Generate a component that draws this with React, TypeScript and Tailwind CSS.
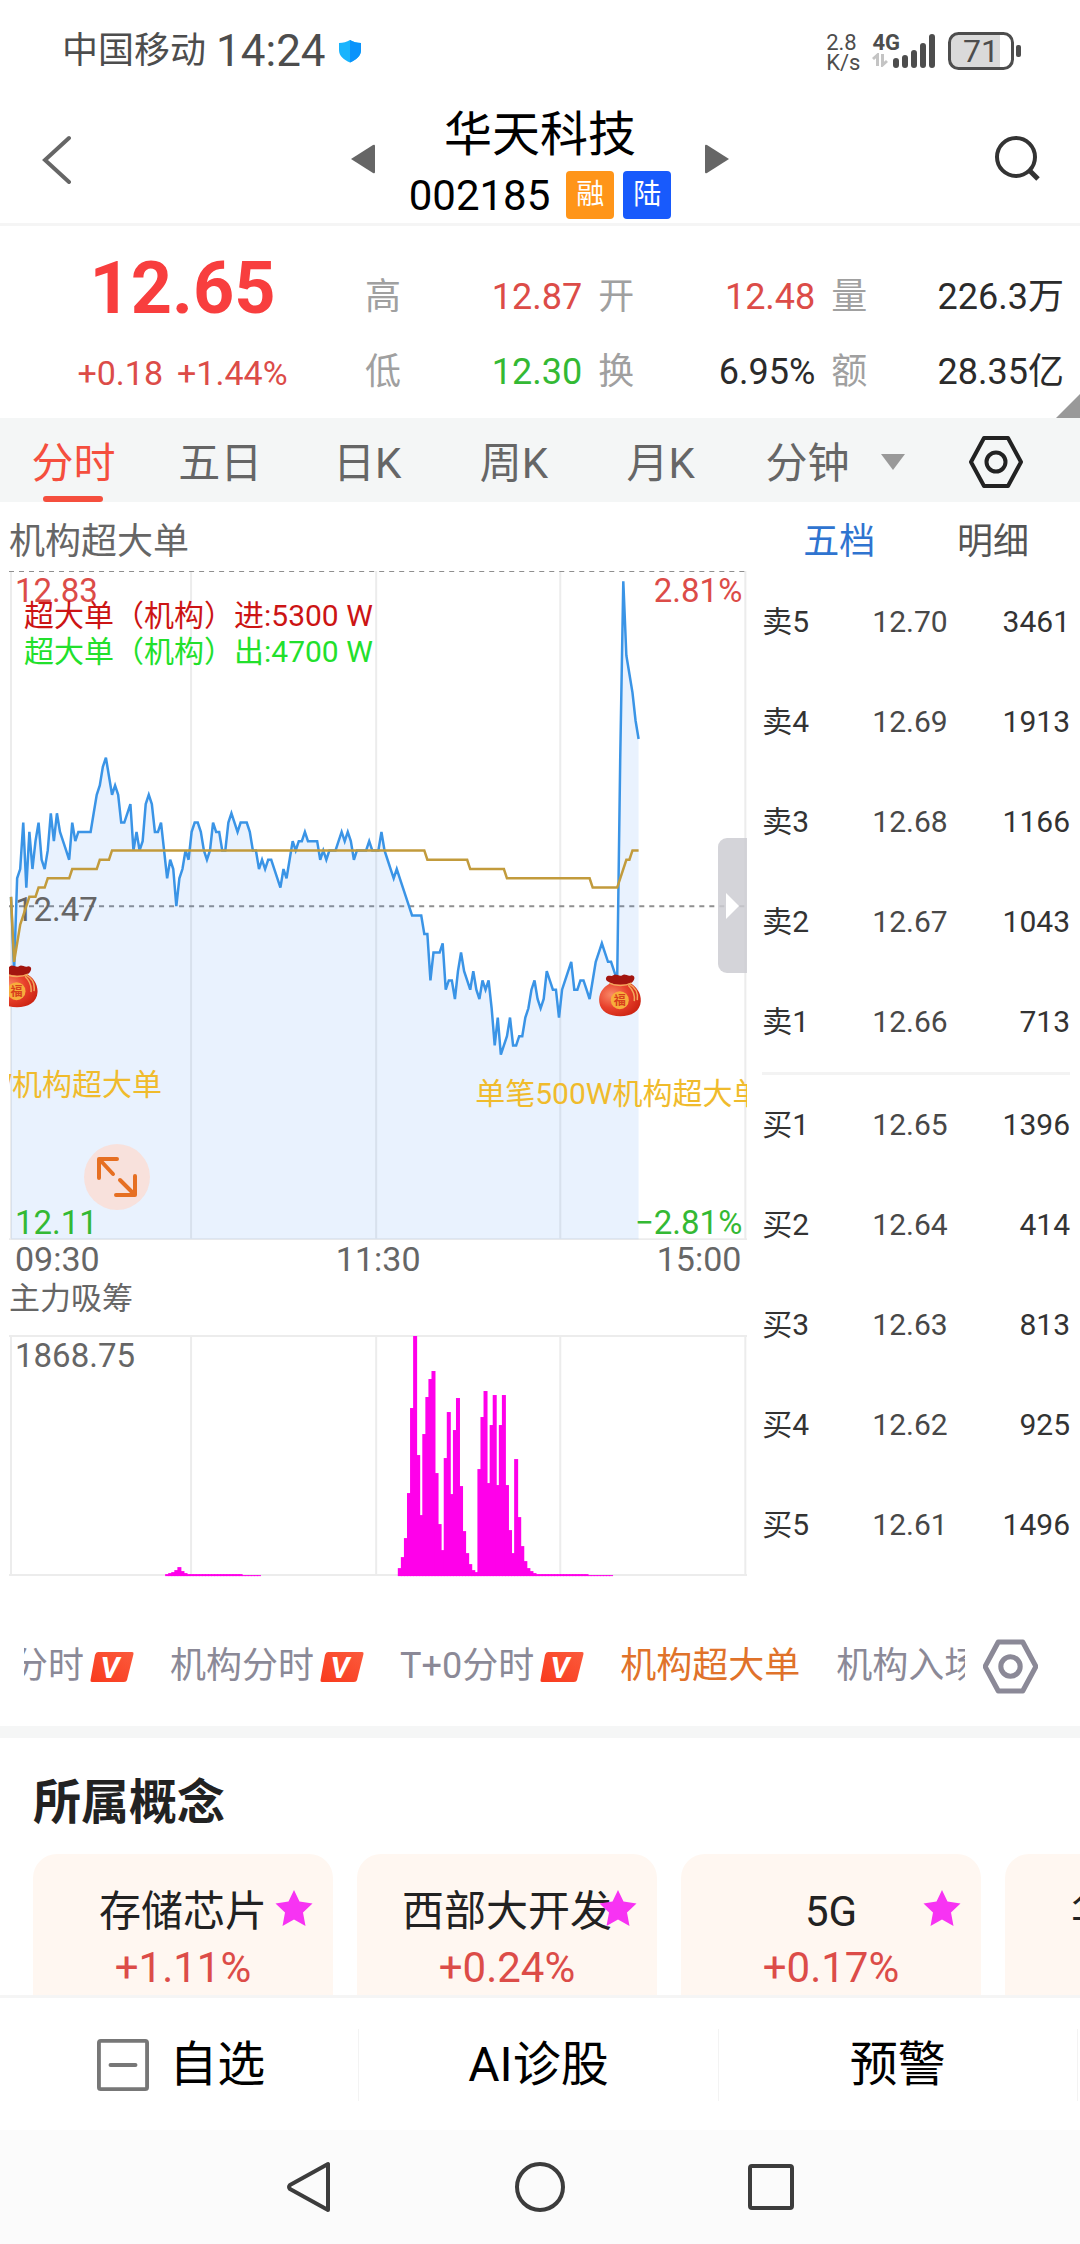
import { useId } from "react";

// price offset from yesterday's close in cents, one value per minute
const prices = [
    1, -7, 3, 4, 9, 2, 8, 4, 7, 9, 5, 4, 6, 10, 7, 10, 8, 7, 6, 5,
    9, 7, 8, 8, 8, 8, 8, 10, 12, 13, 15, 16, 14, 12, 13, 12, 9, 9, 10, 11,
    6, 8, 6, 7, 11, 12, 11, 8, 8, 9, 6, 3, 5, 4, 0, 3, 4, 6, 5, 8,
    9, 9, 8, 6, 5, 6, 9, 8, 8, 6, 6, 9, 10, 9, 8, 9, 9, 9, 8, 6,
    6, 4, 5, 4, 5, 5, 4, 3, 2, 4, 3, 5, 7, 6, 7, 7, 8, 7, 7, 7,
    7, 5, 6, 5, 6, 6, 6, 7, 8, 7, 8, 7, 5, 6, 6, 6, 6, 7, 6, 6,
    6, 8, 6, 5, 4, 3, 4, 3, 2, 1, 0, -1, -1, -1, -1, -3, -3, -8, -5, -5,
    -5, -4, -9, -8, -8, -10, -7, -5, -7, -8, -9, -7, -9, -10, -8, -9, -8, -11, -15, -12,
    -16, -15, -14, -12, -15, -15, -14, -14, -12, -11, -9, -8, -10, -11, -10, -7, -8, -9, -9, -12,
    -9, -8, -7, -6, -9, -9, -8, -8, -9, -10, -8, -6, -5, -4, -5, -6, -6, -7, -8, 16,
    35, 27, 25, 23, 20, 18,
];

// [minute, offset]
const average = [
    [0, 1], [1, -6], [3, -2], [5, 0], [6, 1], [8, 1], [9, 2], [11, 2], [12, 3], [19, 3], [20, 4], [28, 4],
    [29, 5], [32, 5], [33, 6], [135, 6], [136, 5], [149, 5], [150, 4], [161, 4], [162, 3], [189, 3],
    [190, 2], [198, 2], [199, 3], [201, 5], [202, 5], [203, 6], [205, 6],
];

const morningBars = [2, 3, 4, 6, 9, 5, 3, 2, 2, 2, 2, 2, 2, 2, 2, 2, 2, 2, 2, 2, 2, 2, 2, 2, 2, 1, 1, 1, 1, 1, 1];
const afternoonBars = [
    8, 19, 38, 83, 168, 240, 121, 61, 142, 179, 197, 205, 103, 52, 26, 118, 164, 82, 146, 178,
    90, 45, 23, 12, 6, 4, 107, 159, 185, 93, 151, 181, 91, 151, 181, 91, 46, 23, 117, 59,
    30, 15, 8, 5, 3, 2, 2, 2, 2, 2, 2, 2, 2, 2, 2, 2, 2, 2, 2, 2, 2, 2, 1, 1, 1, 1, 1, 1, 1, 1,
];

const xAt = (minute: number) => 2 + minute * 3.06;
const yAt = (offset: number) => 336 - offset * 9.28;

const pricePoints = prices.map((p, i) => `${xAt(i)},${yAt(p)}`).join(" ");
const averagePoints = average.map(([m, p]) => `${xAt(m)},${yAt(p)}`).join(" ");

const gridX = [2, 182, 367, 551, 736];

const sells = [
    ["卖5", "12.70", "3461"],
    ["卖4", "12.69", "1913"],
    ["卖3", "12.68", "1166"],
    ["卖2", "12.67", "1043"],
    ["卖1", "12.66", "713"],
];

const buys = [
    ["买1", "12.65", "1396"],
    ["买2", "12.64", "414"],
    ["买3", "12.63", "813"],
    ["买4", "12.62", "925"],
    ["买5", "12.61", "1496"],
];

const quotes = [
    { label: "高", value: "12.87", color: "text-[#dc4c48]" },
    { label: "开", value: "12.48", color: "text-[#dc4c48]" },
    { label: "量", value: "226.3万", color: "text-[#2b2b2b]" },
    { label: "低", value: "12.30", color: "text-[#34b934]" },
    { label: "换", value: "6.95%", color: "text-[#2b2b2b]" },
    { label: "额", value: "28.35亿", color: "text-[#2b2b2b]" },
];

const concepts = [
    { name: "存储芯片", change: "+1.11%" },
    { name: "西部大开发", change: "+0.24%" },
    { name: "5G", change: "+0.17%" },
    { name: "华为概念", change: "" },
];

const StatusBar = () => (
    <div className="flex h-[100px] items-center justify-between pl-[62px] pr-[58px] pt-px text-[#4d4d4d]">
        <div className="flex items-center">
            <span className="text-[36px] leading-[48px]">中国移动</span>
            <span className="ml-2.5 text-[44px] leading-[48px]">14:24</span>
            <svg className="ml-3 h-[24px] w-[24px]" viewBox="0 0 24 24">
                <path d="M12 1 C15 3 19 4 23 4 V11 C23 17 18 21 12 23.500 C6 21 1 17 1 11 V4 C5 4 9 3 12 1Z" fill="#19b4fd" />
                <path d="M12 1 C15 3 19 4 23 4 V11 C23 17 18 21 12 23.500Z" fill="#0b93fb" />
            </svg>
        </div>
        <div className="flex items-center">
            <div className="pt-1 text-[22px] leading-[20px]">
                <div>2.8</div>
                <div>K/s</div>
            </div>
            <div className="ml-3 flex h-[36px]">
                <div>
                    <div className="text-[22px] font-bold leading-[20px]">4G</div>
                    <svg className="h-[14px] w-[16px]" viewBox="0 0 16 14" fill="none" stroke="#c4c4c4" strokeWidth="3">
                        <path d="M1 6 L5.500 2 V13 M15 8 L10.500 12 V1" />
                    </svg>
                </div>
                <svg className="-ml-2 h-[36px] w-[44px]" viewBox="0 0 44 36" stroke="#4d4d4d" strokeWidth="6" strokeLinecap="round">
                    <path d="M4 28 V32 M13 25 V32 M22 20 V32 M31 13 V32 M40 4 V32" />
                </svg>
            </div>
            <svg className="ml-3 h-[38px] w-[74px]" viewBox="0 0 74 38">
                <rect x="2" y="2" width="49" height="34" rx="8" fill="#dadada" />
                <rect x="44" y="2" width="8" height="34" fill="#dadada" />
                <rect x="1.500" y="1.500" width="63" height="35" rx="9" fill="none" stroke="#4d4d4d" strokeWidth="3" />
                <rect x="68" y="13" width="5" height="12" rx="2" fill="#4d4d4d" />
                <text x="33" y="30" textAnchor="middle" fontSize="32" fill="#4d4d4d">71</text>
            </svg>
        </div>
    </div>
);

const Header = () => (
    <header className="flex h-[126px] items-center justify-between border-b-[3px] border-[#f5f5f5] px-[40px] pb-[5px]">
        <button aria-label="返回" className="w-[48px]">
            <svg className="h-[50px] w-[32px]" viewBox="0 0 32 50" fill="none" stroke="#666" strokeWidth="4" strokeLinecap="round">
                <path d="M29 4 L5 26 L29 48" />
            </svg>
        </button>
        <div className="flex items-center">
            <button aria-label="上一只">
                <svg className="h-[30px] w-[24px]" viewBox="0 0 24 30" fill="#666">
                    <path d="M0 15 L22 1 Q24 0 24 2 V28 Q24 30 22 29Z" />
                </svg>
            </button>
            <div className="mx-[34px] flex flex-col items-center">
                <h1 className="text-[48px] leading-[72px] text-black">华天科技</h1>
                <div className="flex h-[49px] items-center text-[42px] leading-[49px] text-black">
                    002185
                    <span className="ml-4 h-[48px] w-[48px] rounded-[4px] bg-[#ff9519] text-center text-[28px] leading-[48px] text-white">融</span>
                    <span className="ml-[9px] h-[48px] w-[48px] rounded-[4px] bg-[#185afc] text-center text-[28px] leading-[48px] text-white">陆</span>
                </div>
            </div>
            <button aria-label="下一只">
                <svg className="h-[30px] w-[24px]" viewBox="0 0 24 30" fill="#666">
                    <path d="M24 15 L2 1 Q0 0 0 2 V28 Q0 30 2 29Z" />
                </svg>
            </button>
        </div>
        <button aria-label="搜索" className="w-[48px]">
            <svg className="h-[48px] w-[48px]" viewBox="0 0 48 48" fill="none" stroke="#333" strokeWidth="4">
                <circle cx="24" cy="22" r="19" />
                <path d="M37 35 L46 44" strokeWidth="5" />
            </svg>
        </button>
    </header>
);

const Quote = () => (
    <section className="relative flex h-[192px]">
        <div className="flex w-[33.8%] flex-col items-center">
            <div className="mt-[21px] text-[72px] font-bold leading-[84px] text-[#f83e3e]">12.65</div>
            <div className="mt-[22px] flex gap-3.5 text-[34px] leading-[40px] text-[#dc4c48]">
                <span>+0.18</span>
                <span>+1.44%</span>
            </div>
        </div>
        <div className="grid flex-1 grid-cols-[14fr_14fr_15fr] content-start gap-x-4 gap-y-[27px] pr-4 pt-[47px] text-[36px] leading-[48px]">
            {quotes.map((q) => (
                <div key={q.label} className="flex justify-between">
                    <span className="text-[#a0a0a0]">{q.label}</span>
                    <span className={q.color}>{q.value}</span>
                </div>
            ))}
        </div>
        <svg className="absolute bottom-0 right-0 h-[24px] w-[24px]" viewBox="0 0 24 24">
            <path d="M24 0 V24 H0Z" fill="#999" />
        </svg>
    </section>
);

const HexIcon = ({ className }: { className: string }) => (
    <svg className={className} viewBox="0 0 54 54" fill="none" stroke="currentColor" strokeLinejoin="round">
        <path d="M15 3 H39 L52 27 L39 51 H15 L2 27Z" />
        <circle cx="27" cy="27" r="9.500" />
    </svg>
);

const periods = ["分时", "五日", "日K", "周K", "月K", "分钟"];

const PeriodTabs = () => (
    <nav className="flex h-[84px] bg-[#f4f6f6]">
        {periods.map((p, i) => (
            <button key={p} className={`relative h-[84px] flex-1 pt-[4px] text-[42px] leading-[84px] ${i === 0 ? "text-[#f54f3e]" : "text-[#666]"}`}>
                {p}
                {i === 0 && <span className="absolute bottom-0 left-1/2 h-[6px] w-[60px] -translate-x-1/2 rounded-full bg-[#f54f3e]"></span>}
            </button>
        ))}
        <div className="flex w-[199px] items-center justify-between pr-[57px] pt-1">
            <svg className="h-[16px] w-[24px]" viewBox="0 0 24 16">
                <path d="M0 0 H24 L12 16Z" fill="#999" />
            </svg>
            <button aria-label="设置" className="text-[#222]">
                <HexIcon className="h-[54px] w-[54px] stroke-4" />
            </button>
        </div>
    </nav>
);

const Bag = ({ x, y }: { x: number; y: number }) => {
    const id = useId();
    return (
        <g transform={`translate(${x} ${y})`}>
            <defs>
                <radialGradient id={id} cx="0.3" cy="0.35" r="0.8">
                    <stop offset="0" stopColor="#f98a68" />
                    <stop offset="0.500" stopColor="#e8412c" />
                    <stop offset="1" stopColor="#c9200f" />
                </radialGradient>
            </defs>
            <path d="M12 9 C4 13 0 20 1 28 C2 37 11 42 22 42 C33 42 42 37 42.500 27 C43 19 38 12 32 9Z" fill={`url(#${id})`} />
            <path d="M8 3 C10 0 13 3 15 1 C18 -1 21 3 24 1 C27 -1 30 3 33 1 C37 1 37 5 34 8 C30 11 14 11 11 8 C8 7 7 5 8 3Z" fill="#a3150f" />
            <path d="M11 9 C17 12 27 12 33 9 M31 10 C37 13 40 19 39 26 M30 11 C34 15 37 20 36 27" fill="none" stroke="#f2a95c" strokeWidth="1.500" />
            <circle cx="21.500" cy="26" r="9" fill="#f7ae3c" />
            <text x="21.500" y="30.500" textAnchor="middle" fontSize="12" fontWeight="700" fill="#d8401c">福</text>
        </g>
    );
};

const PriceChart = () => (
    <div className="relative">
        <svg className="block w-full" viewBox="0 0 738 670">
            <g stroke="#ececec" strokeWidth="2">
                {gridX.map((x) => (
                    <path key={x} d={`M${x} 1 V669`} />
                ))}
                <path d="M0 669 H738" />
            </g>
            <g stroke="#8f8f8f" strokeDasharray="5 5">
                <path d="M0 1.500 H738" strokeWidth="1" />
                <path d="M0 336 H738" strokeWidth="2" />
            </g>
            <polygon points={`${xAt(0)},669 ${pricePoints} ${xAt(205)},669`} fill="#3b8cf5" fillOpacity="0.110" />
            <g fontSize="33">
                <text x="6" y="32" fill="#dc4c48">12.83</text>
                <text x="733" y="32" textAnchor="end" fill="#dc4c48">2.81%</text>
                <text x="6" y="351" fill="#666">12.47</text>
                <text x="6" y="664" fill="#34b934">12.11</text>
                <text x="733" y="664" textAnchor="end" fill="#34b934">−2.81%</text>
            </g>
            <polyline points={pricePoints} fill="none" stroke="#3a94e6" strokeWidth="2.500" />
            <polyline points={averagePoints} fill="none" stroke="#c29b3c" strokeWidth="2.500" />
            <g fontSize="30">
                <text x="15" y="56" fill="#cc1414">超大单（机构）进:5300 W</text>
                <text x="15" y="92" fill="#22e02c">超大单（机构）出:4700 W</text>
                <text x="153" y="525" textAnchor="end" fill="#f0bb2c">单笔500W机构超大单</text>
                <text x="466" y="534" fill="#f0bb2c">单笔500W机构超大单</text>
            </g>
            <Bag x={-14} y={395} />
            <Bag x={589} y={404} />
        </svg>
        <button aria-label="全屏" className="absolute bottom-[30px] left-[75px] h-[66px] w-[66px] rounded-full bg-[#fbdcd3]/80">
            <svg className="h-[66px] w-[66px]" viewBox="0 0 66 66" fill="none" stroke="#e66f22" strokeWidth="4" strokeLinecap="round" strokeLinejoin="round">
                <path d="M15 34 V15 H33 M16 16 L29 30 M36 36 L50 50 M51 32 V51 H32" />
            </svg>
        </button>
        <button aria-label="收起盘口" className="absolute right-0 top-[268px] flex h-[135px] w-[29px] items-center justify-center rounded-l-[9px] bg-[#cdccd2]/85">
            <svg className="h-[26px] w-[13px]" viewBox="0 0 13 26">
                <path d="M0 0 L13 13 L0 26Z" fill="white" />
            </svg>
        </button>
    </div>
);

const Bars = ({ start, values }: { start: number; values: number[] }) => (
    <g fill="#ff00ea">
        {values.map((v, i) => (
            <rect key={i} x={xAt(start + i) - 2} y={241 - v} width="4" height={v} />
        ))}
    </g>
);

const VolumeChart = () => (
    <svg className="block w-full" viewBox="0 0 738 242">
        <g stroke="#ececec" strokeWidth="2">
            {gridX.map((x) => (
                <path key={x} d={`M${x} 1 V240`} />
            ))}
            <path d="M0 1 H738 M0 240 H738" />
        </g>
        <text x="6" y="32" fontSize="33" fill="#666">1868.75</text>
        <Bars start={51} values={morningBars} />
        <Bars start={127} values={afternoonBars} />
    </svg>
);

const OrderRow = ({ row }: { row: string[] }) => (
    <tr className="h-[100px] text-[30px] leading-[40px] text-[#333]">
        <th scope="row" className="w-[30%] p-0 text-left font-normal">{row[0]}</th>
        <td className="w-[36%] p-0 text-center text-[#484848]">{row[1]}</td>
        <td className="p-0 text-right">{row[2]}</td>
    </tr>
);

const OrderBook = () => (
    <aside className="flex-1 pl-[15px] pr-2.5">
        <div className="flex h-[70px] text-[36px] leading-[80px]">
            <button className="h-[70px] flex-1 text-[#2f74d0]">五档</button>
            <button className="h-[70px] flex-1 text-[#555]">明细</button>
        </div>
        <table className="w-full table-fixed">
            <tbody>
                {sells.map((row) => (
                    <OrderRow key={row[0]} row={row} />
                ))}
            </tbody>
        </table>
        <div className="h-[3px] bg-[#f3f3f3]"></div>
        <table className="w-full table-fixed">
            <tbody>
                {buys.map((row) => (
                    <OrderRow key={row[0]} row={row} />
                ))}
            </tbody>
        </table>
    </aside>
);

const VBadge = () => {
    const id = useId();
    return (
        <svg className="ml-1.5 h-[30px] w-[44px] shrink-0" viewBox="0 0 44 30">
            <defs>
                <linearGradient id={id} x1="0" y1="1" x2="1" y2="0">
                    <stop offset="0" stopColor="#f93a1c" />
                    <stop offset="1" stopColor="#fb5a3c" />
                </linearGradient>
            </defs>
            <path d="M8 0 H42 Q44 0 43.500 2 L37 28 Q36.500 30 34 30 H2 Q0 30 0.500 28 L5 3 Q6 0 8 0Z" fill={`url(#${id})`} />
            <text x="20" y="26" textAnchor="middle" fontSize="30" fontWeight="700" fontStyle="italic" fill="white">V</text>
        </svg>
    );
};

const indicators = [
    { name: "分时", vip: true },
    { name: "机构分时", vip: true },
    { name: "T+0分时", vip: true },
    { name: "机构超大单", vip: false },
    { name: "机构入场", vip: false },
];

const IndicatorTabs = () => (
    <div className="flex items-center pb-[32px] pl-[24px] pr-[42px] pt-[62px]">
        <div className="flex-1 overflow-hidden">
            <div className="-ml-3 flex w-0 gap-[36px]">
                {indicators.map((t) => (
                    <button key={t.name} className={`flex shrink-0 items-center whitespace-nowrap text-[36px] leading-[55px] ${t.name === "机构超大单" ? "text-[#e0722a]" : "text-[#8b8997]"}`}>
                        {t.name}
                        {t.vip && <VBadge />}
                    </button>
                ))}
            </div>
        </div>
        <button aria-label="指标设置" className="ml-[18px] text-[#8b8997]">
            <HexIcon className="h-[55px] w-[55px] stroke-5" />
        </button>
    </div>
);

const Concepts = () => (
    <section className="overflow-hidden border-t-[12px] border-[#f5f6f6] pl-[33px] pt-[29px]">
        <h2 className="text-[48px] font-bold leading-[72px] text-[#222]">所属概念</h2>
        <div className="mt-[15px] flex w-0 gap-[24px]">
            {concepts.map((c) => (
                <a key={c.name} href="#" className="relative block h-[141px] w-[300px] shrink-0 rounded-t-[24px] bg-[#fff7f1] pt-[30px] text-center text-[42px] leading-[56px] text-[#222]">
                    <div>{c.name}</div>
                    <div className="text-[#dc4c48]">{c.change}</div>
                    <svg className="absolute right-[20px] top-[36px] h-[36px] w-[38px]" viewBox="0 0 38 36" fill="#f733f3">
                        <path d="M19 0 L24.500 11.500 L37.500 13.500 L28 22.500 L30.500 36 L19 29.500 L7.500 36 L10 22.500 L0.500 13.500 L13.500 11.500Z" />
                    </svg>
                </a>
            ))}
        </div>
    </section>
);

const BottomBar = () => (
    <div className="grid grid-cols-3 border-t-[3px] border-[#f5f5f5] pb-[29px] pt-[31px] pr-[2px] text-[48px] leading-[72px] text-black">
        <button className="flex items-center justify-center border-r border-[#f3f3f3] pl-1">
            <svg className="mr-[20px] h-[52px] w-[52px]" viewBox="0 0 54 54" fill="none" stroke="#777" strokeWidth="4">
                <rect x="2" y="2" width="50" height="50" rx="2" />
                <path d="M14 27 H40" strokeLinecap="round" />
            </svg>
            自选
        </button>
        <button className="border-r border-[#f3f3f3]">AI诊股</button>
        <button className="border-r border-[#f3f3f3]">预警</button>
    </div>
);

const SystemNav = () => (
    <div className="flex h-[114px] items-center justify-center gap-[182px] bg-[#fbfbfb]">
        <button aria-label="后退">
            <svg className="h-[52px] w-[46px]" viewBox="0 0 46 52" fill="none" stroke="#3c3c3c" strokeWidth="4" strokeLinejoin="round">
                <path d="M42 3 V49 L4 28 Q2 26 4 24Z" />
            </svg>
        </button>
        <button aria-label="主页">
            <svg className="h-[52px] w-[52px]" viewBox="0 0 52 52" fill="none" stroke="#3c3c3c" strokeWidth="4">
                <circle cx="26" cy="26" r="23" />
            </svg>
        </button>
        <button aria-label="最近任务">
            <svg className="h-[46px] w-[46px]" viewBox="0 0 46 46" fill="none" stroke="#3c3c3c" strokeWidth="4">
                <rect x="2" y="2" width="42" height="42" rx="2" />
            </svg>
        </button>
    </div>
);

const App = () => {
    return (
        <div className="overflow-hidden bg-white font-[Roboto,'Noto_Sans_CJK_SC',sans-serif]">
            <StatusBar />
            <Header />
            <Quote />
            <PeriodTabs />
            <main className="flex">
                <div className="w-[69.2%] pl-[9px]">
                    <h2 className="h-[68px] text-[36px] leading-[80px] text-[#666]">机构超大单</h2>
                    <PriceChart />
                    <div className="flex justify-between px-[6px] text-[34px] leading-[38px] text-[#666]">
                        <span>09:30</span>
                        <span>11:30</span>
                        <span>15:00</span>
                    </div>
                    <h2 className="mb-[15px] text-[31px] leading-[42px] text-[#666]">主力吸筹</h2>
                    <VolumeChart />
                </div>
                <OrderBook />
            </main>
            <IndicatorTabs />
            <Concepts />
            <BottomBar />
            <SystemNav />
        </div>
    );
};

export default App;
